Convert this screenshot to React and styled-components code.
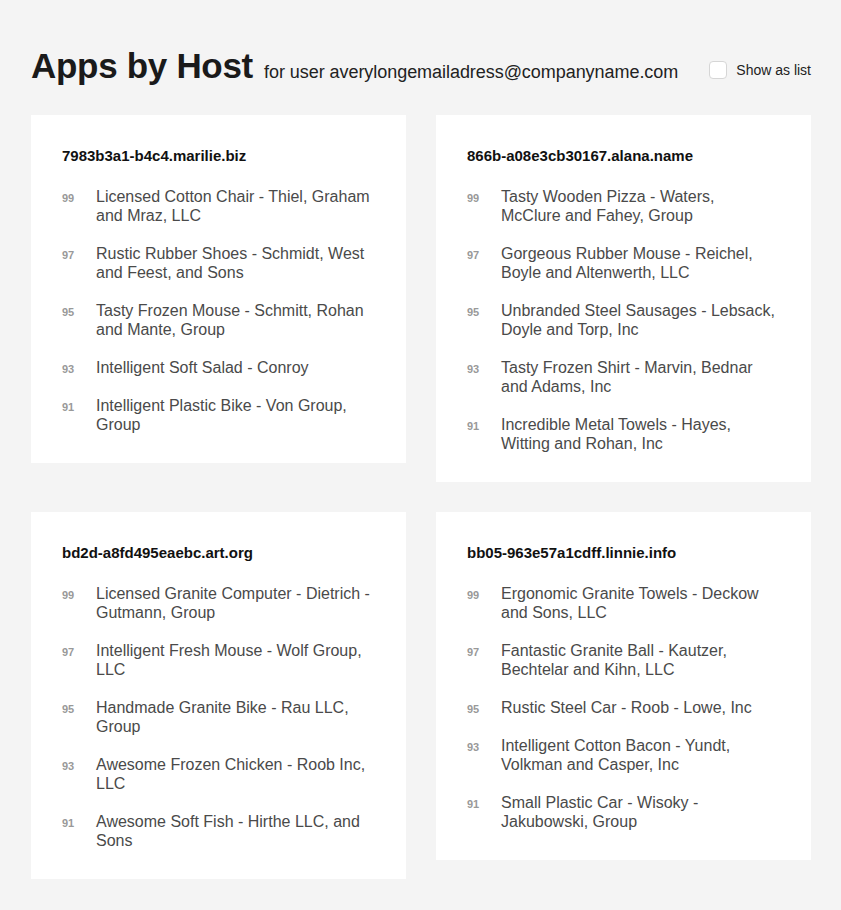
import React from "react";
import styled, { createGlobalStyle } from "styled-components";

const hosts = [
  {
    name: "7983b3a1-b4c4.marilie.biz",
    apps: [
      [99, "Licensed Cotton Chair - Thiel, Graham and Mraz, LLC"],
      [97, "Rustic Rubber Shoes - Schmidt, West and Feest, and Sons"],
      [95, "Tasty Frozen Mouse - Schmitt, Rohan and Mante, Group"],
      [93, "Intelligent Soft Salad - Conroy"],
      [91, "Intelligent Plastic Bike - Von Group, Group"],
    ],
  },
  {
    name: "866b-a08e3cb30167.alana.name",
    apps: [
      [99, "Tasty Wooden Pizza - Waters, McClure and Fahey, Group"],
      [97, "Gorgeous Rubber Mouse - Reichel, Boyle and Altenwerth, LLC"],
      [95, "Unbranded Steel Sausages - Lebsack, Doyle and Torp, Inc"],
      [93, "Tasty Frozen Shirt - Marvin, Bednar and Adams, Inc"],
      [91, "Incredible Metal Towels - Hayes, Witting and Rohan, Inc"],
    ],
  },
  {
    name: "bd2d-a8fd495eaebc.art.org",
    apps: [
      [99, "Licensed Granite Computer - Dietrich - Gutmann, Group"],
      [97, "Intelligent Fresh Mouse - Wolf Group, LLC"],
      [95, "Handmade Granite Bike - Rau LLC, Group"],
      [93, "Awesome Frozen Chicken - Roob Inc, LLC"],
      [91, "Awesome Soft Fish - Hirthe LLC, and Sons"],
    ],
  },
  {
    name: "bb05-963e57a1cdff.linnie.info",
    apps: [
      [99, "Ergonomic Granite Towels - Deckow and Sons, LLC"],
      [97, "Fantastic Granite Ball - Kautzer, Bechtelar and Kihn, LLC"],
      [95, "Rustic Steel Car - Roob - Lowe, Inc"],
      [93, "Intelligent Cotton Bacon - Yundt, Volkman and Casper, Inc"],
      [91, "Small Plastic Car - Wisoky - Jakubowski, Group"],
    ],
  },
];

const App = () => {
  return (
    <>
      <GlobalStyle />
      <Page>
        <Header>
          <Title>Apps by Host</Title>
          <Subtitle>for user averylongemailadress@companyname.com</Subtitle>
          <ListToggle>
            <input type="checkbox" />
            <Box />
            Show as list
          </ListToggle>
        </Header>
        <Grid>
          {hosts.map((host) => (
            <Card key={host.name}>
              <HostName>{host.name}</HostName>
              <AppList>
                {host.apps.map(([score, title]) => (
                  <AppRow key={title}>
                    <Score>{score}</Score>
                    <AppName>{title}</AppName>
                  </AppRow>
                ))}
              </AppList>
            </Card>
          ))}
        </Grid>
      </Page>
    </>
  );
};

const GlobalStyle = createGlobalStyle`
  html, body {
    margin: 0;
    background: #f4f4f4;
    font-family: "Liberation Sans", Arial, sans-serif;
  }
`;

const Page = styled.div`
  padding: 48px 30px 31px 31px;
`;

const Header = styled.div`
  display: flex;
  align-items: baseline;
  white-space: nowrap;
  margin-bottom: 32px;
`;

const Title = styled.h1`
  margin: 0;
  font-size: 35px;
  line-height: 35px;
  font-weight: bold;
  letter-spacing: -0.3px;
  color: #1a1a1a;
`;

const Subtitle = styled.span`
  margin-left: 11px;
  font-size: 18px;
  letter-spacing: -0.05px;
  color: #222;
`;

const ListToggle = styled.label`
  margin-left: auto;
  display: flex;
  align-items: center;
  gap: 9px;
  font-size: 14px;
  color: #222;
  position: relative;
  top: 1px;

  input {
    position: absolute;
    opacity: 0;
    width: 0;
    height: 0;
    margin: 0;
  }
`;

const Box = styled.span`
  width: 16px;
  height: 16px;
  border: 1px solid #d6d6d6;
  border-radius: 4px;
  background: #fff;
  display: inline-block;
`;

const Grid = styled.div`
  display: grid;
  grid-template-columns: 375px 375px;
  gap: 30px;
  align-items: start;
`;

const Card = styled.div`
  background: #fff;
  padding: 32px 35px 29px 31px;
`;

const HostName = styled.div`
  font-size: 15px;
  line-height: 18px;
  font-weight: bold;
  color: #111;
`;

const AppList = styled.ul`
  list-style: none;
  margin: 22px 0 0;
  padding: 0;
  display: flex;
  flex-direction: column;
  gap: 19px;
`;

const AppRow = styled.li`
  display: flex;
  align-items: baseline;
`;

const Score = styled.span`
  width: 34px;
  flex-shrink: 0;
  font-size: 11px;
  font-weight: bold;
  color: #999;
`;

const AppName = styled.span`
  flex: 1;
  font-size: 16px;
  line-height: 19px;
  color: #4a4a4a;
`;

export default App;
